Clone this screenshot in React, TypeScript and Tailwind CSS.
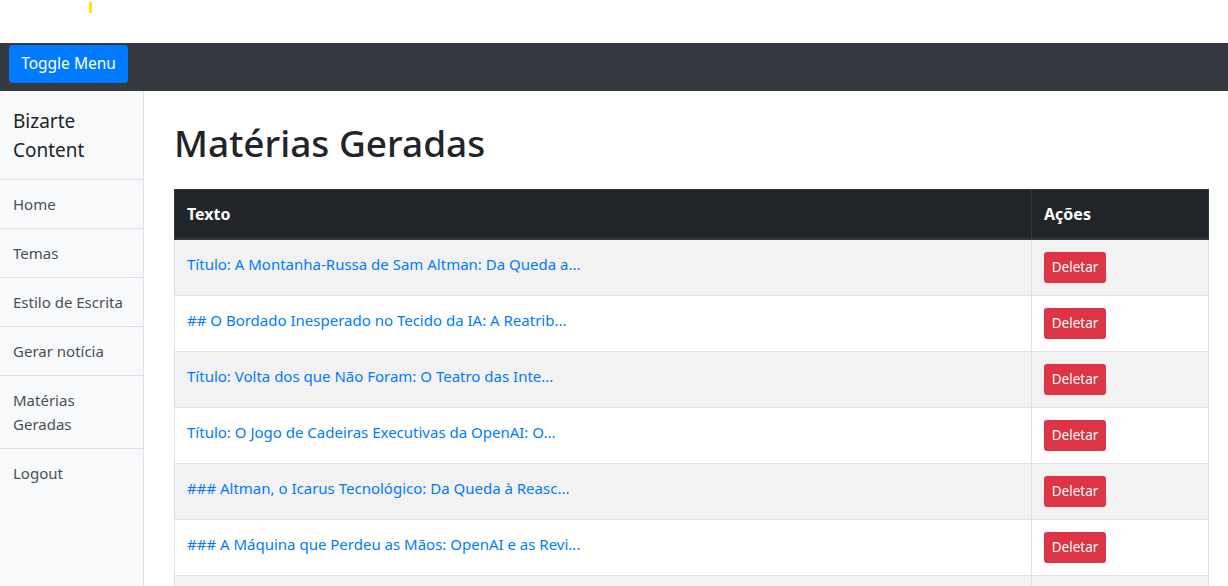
import React from 'react';

const menu = ['Home', 'Temas', 'Estilo de Escrita', 'Gerar notícia', 'Matérias Geradas', 'Logout'];

const materias = [
  'Título: A Montanha-Russa de Sam Altman: Da Queda a...',
  '## O Bordado Inesperado no Tecido da IA: A Reatrib...',
  'Título: Volta dos que Não Foram: O Teatro das Inte...',
  'Título: O Jogo de Cadeiras Executivas da OpenAI: O...',
  '### Altman, o Icarus Tecnológico: Da Queda à Reasc...',
  '### A Máquina que Perdeu as Mãos: OpenAI e as Revi...',
  'Título: O Retorno do Rei: Sam Altman e a Saga da O...',
];

function Sidebar() {
  return (
    <aside className="w-[144px] shrink-0 border-r border-[#dee2e6] bg-[#f8f9fa] min-h-[495px]">
      <div className="px-[13px] pt-[16px] pb-[14px] text-[19px] leading-[29px] text-[#212529] border-b border-[#dee2e6]">
        Bizarte Content
      </div>
      {menu.map((item, i) => (
        <a
          key={item}
          href="#"
          className={
            'block px-[13px] py-[12px] text-[15px] leading-[24px] text-[#495057] ' +
            (i < menu.length - 1 ? 'border-b border-[#dee2e6]' : '')
          }
        >
          {item}
        </a>
      ))}
    </aside>
  );
}

function Table() {
  return (
    <table className="w-full border-collapse text-[16px]">
      <thead>
        <tr className="bg-[#212529] text-white">
          <th className="text-left font-bold px-[12px] py-[12px] leading-[24px] border border-[#32383e] border-b-2">
            Texto
          </th>
          <th className="w-[177px] text-left font-bold px-[12px] py-[12px] leading-[24px] border border-[#32383e] border-b-2">
            Ações
          </th>
        </tr>
      </thead>
      <tbody>
        {materias.map((t, i) => (
          <tr key={i} className={i % 2 === 0 ? 'bg-[#f2f2f2]' : 'bg-white'}>
            <td className="px-[12px] py-[12px] border border-[#dee2e6] align-top">
              <a href="#" className="text-[#007bff] text-[15px] leading-[24px]">
                {t}
              </a>
            </td>
            <td className="px-[12px] py-[12px] border border-[#dee2e6] align-top">
              <button className="h-[31px] w-[62px] rounded-[3px] bg-[#dc3545] text-[13.5px] text-white">
                Deletar
              </button>
            </td>
          </tr>
        ))}
      </tbody>
    </table>
  );
}

export default function App() {
  return (
    <div className="min-h-screen bg-white font-['Noto_Sans','Liberation_Sans',sans-serif] text-[#212529]">
      <div className="h-[43px] pt-[2px]">
        <div className="ml-[89px] h-[11px] w-[3px] bg-[#ffe600]" />
      </div>
      <nav className="h-[48px] bg-[#343a40] px-[9px] pt-[2px]">
        <button className="h-[38px] w-[119px] rounded-[4px] bg-[#007bff] text-[15.5px] text-white">
          Toggle Menu
        </button>
      </nav>
      <div className="flex">
        <Sidebar />
        <main className="flex-1 pl-[30px] pr-[19px] pt-[28px]">
          <h1 className="mb-[22px] text-[37px] leading-[48px] font-medium">Matérias Geradas</h1>
          <Table />
        </main>
      </div>
    </div>
  );
}
